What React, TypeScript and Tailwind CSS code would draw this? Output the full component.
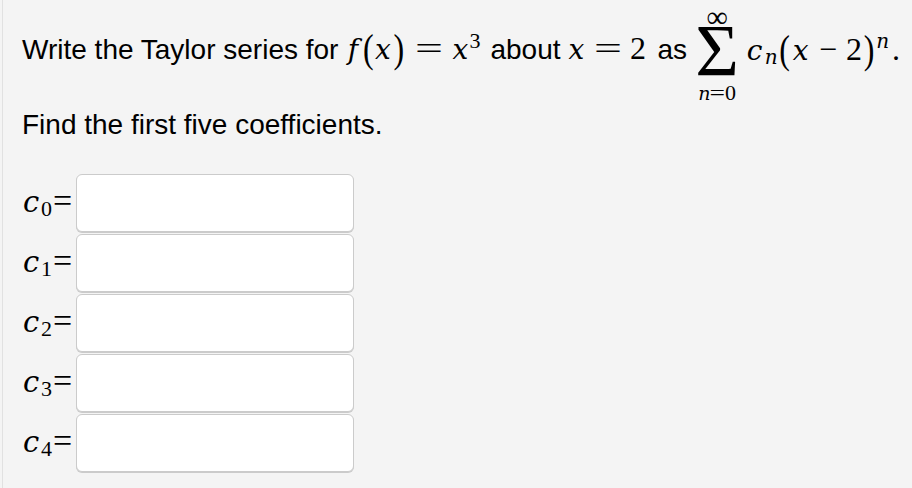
const sans = "font-['Liberation_Sans',Arial,sans-serif]";
const serif = "font-['Liberation_Serif','Times_New_Roman',serif]";
const mathIt = "font-['DejaVu_Serif','Liberation_Serif',serif] italic text-[28px]";

// one math token in a box of fixed width, centred
const Tk = ({
  w,
  children,
  it = false,
  c = "",
}: {
  w: string;
  children: React.ReactNode;
  it?: boolean;
  c?: string;
}) => (
  <span className={`inline-block text-center ${it ? mathIt : serif} ${w} ${c}`}>
    <span className={`inline-block ${c.includes("eq") ? "scale-x-[1.55]" : ""}`}>{children}</span>
  </span>
);

const Sum = () => (
  <div className={`ml-[8px] mt-[9px] w-[44px] flex flex-col items-center ${serif} text-black`}>
    <div className="h-[16px] text-[30px] leading-[16px]">∞</div>
    <div className="h-[52px] text-[75px] leading-[52px]">Σ</div>
    <div className="mt-[5px] h-[22px] text-[22px] leading-[22px] whitespace-nowrap">
      <span className="font-['DejaVu_Serif',serif] italic text-[19px]">n</span>
      <span className="inline-block scale-x-125 mx-[1px]">=</span>
      <span>0</span>
    </div>
  </div>
);

const Coef = ({ k }: { k: number }) => (
  <div className="flex items-start h-[58px]">
    <div className={`mt-[10px] w-[54px] ${serif} text-black text-[34px] leading-[34px] whitespace-nowrap`}>
      <span className="inline-block w-[18px] text-center font-['DejaVu_Serif',serif] italic text-[29px]">c</span>
      <span className="inline-block w-[13px] text-center relative top-[4px] text-[22px]">{k}</span>
      <span className="inline-block w-[18px] text-center">=</span>
    </div>
    <input
      type="text"
      className="w-[278px] h-[58px] bg-white rounded-[6px] border border-[#cbcbcb] shadow-[0_1px_0_#cbcbcb] outline-none"
    />
  </div>
);

export default function App() {
  return (
    <div className="w-full h-[488px] bg-[#f4f4f4] pl-[2px] overflow-hidden">
      <div className="h-full border-l border-[#e1e1e1] pl-[19px]">
        <div className="flex items-start h-[104px] text-black">
          <div className={`mt-[31px] ${sans} text-[28px] leading-[34px] whitespace-nowrap`}>
            <span>Write the Taylor series for</span>
            <span className="text-[32px] ml-[5px]">
              <Tk w="w-[19px]" it>f</Tk>
              <Tk w="w-[12px]" c="scale-y-125">(</Tk>
              <Tk w="w-[17px]" it>x</Tk>
              <Tk w="w-[15px]" c="scale-y-125">)</Tk>
              <Tk w="w-[46px]" c="eq">=</Tk>
              <Tk w="w-[16px]" it>x</Tk>
              <Tk w="w-[13px]" c="relative -top-[11px] text-[22px]">3</Tk>
            </span>
            <span className="ml-[9px]">about</span>
            <span className="text-[32px]">
              <Tk w="w-[32px]" it>x</Tk>
              <Tk w="w-[32px]" c="eq">=</Tk>
              <Tk w="w-[27px]">2</Tk>
            </span>
            <span className="ml-[6px]">as</span>
          </div>
          <Sum />
          <div className="mt-[31px] text-[32px] leading-[34px] whitespace-nowrap ml-[7px]">
            <Tk w="w-[17px]" it>c</Tk>
            <Tk w="w-[16px]" it c="relative top-[4px] !text-[20px]">n</Tk>
            <Tk w="w-[11px]" c="scale-y-125">(</Tk>
            <Tk w="w-[21px]" it>x</Tk>
            <Tk w="w-[34px]">−</Tk>
            <Tk w="w-[18px]">2</Tk>
            <Tk w="w-[12px]" c="scale-y-125">)</Tk>
            <Tk w="w-[15px]" it c="relative -top-[12px] !text-[20px]">n</Tk>
            <Tk w="w-[12px]">.</Tk>
          </div>
        </div>
        <p className={`mt-[4px] ${sans} text-[28px] leading-[34px] text-black`}>
          Find the first five coefficients.
        </p>
        <div className="mt-[32px] flex flex-col gap-[2px]">
          {[0, 1, 2, 3, 4].map((k) => (
            <Coef key={k} k={k} />
          ))}
        </div>
      </div>
    </div>
  );
}
